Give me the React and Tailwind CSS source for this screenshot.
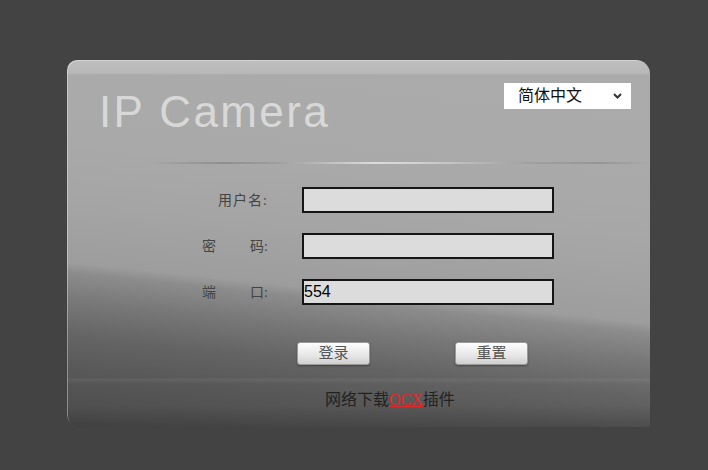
import React from "react";

const labelFont = "font-['Liberation_Serif','Noto_Sans_CJK_SC',serif]";

const Field = ({ label, value }) => (
  <div className="flex h-[26px] items-center pl-[135px]">
    <div className={`w-[66px] text-[14px] text-[#444] ${labelFont}`}>{label}</div>
    <div className="ml-[34px] flex h-[26px] w-[252px] items-center border-2 border-[#151515] bg-[#dcdcdc] font-['Liberation_Sans',sans-serif] text-[16px] text-black">
      {value}
    </div>
  </div>
);

const Btn = ({ children }) => (
  <button className="flex h-[23px] w-[73px] items-center justify-center rounded-[3px] border border-[#9a9a9a] bg-[linear-gradient(to_bottom,#fdfdfd,#e6e6e6_60%,#cfcfcf)] font-['Liberation_Serif','Noto_Sans_CJK_SC',serif] text-[15px] text-[#555] shadow-[0_1px_2px_rgba(0,0,0,0.35)]">
    {children}
  </button>
);

export default function App() {
  return (
    <div className="min-h-[470px] w-full bg-[#434343] pl-[67px] pt-[60px]">
      <div className="flex h-[367px] w-[583px] flex-col rounded-tl-[10px] rounded-tr-[14px] rounded-bl-[12px] bg-[linear-gradient(to_bottom,#bebebe_0px,#b8b8b8_13px,transparent_15px),linear-gradient(to_bottom,transparent_318px,rgba(255,255,255,0.06)_319px,transparent_324px,transparent_345px,rgba(0,0,0,0.14)_367px),linear-gradient(186deg,#ababab_40px,#a9a9a9_140px,#a5a5a5_200px,#9d9d9d_262px,#8c8c8c_272px,#787878_300px,#646464_335px,#585858_370px,#4a4a4a_427px)] shadow-[inset_1px_1px_0_rgba(255,255,255,0.35)]">
        <div className="flex items-start justify-between pl-[32px] pr-[19px] pt-[23px]">
          <div className="mt-[7px] font-['Liberation_Sans',sans-serif] text-[44px] leading-none tracking-[2.4px] text-[#d8d8d8]">
            IP Camera
          </div>
          <div className="flex h-[26px] w-[127px] items-center justify-between bg-white pl-[14px] pr-[9px] font-['Liberation_Sans','Noto_Sans_CJK_SC',sans-serif] text-[16px] text-[#111]">
            <span>简体中文</span>
            <svg width="9" height="6" viewBox="0 0 9 6">
              <path d="M1 1l3.5 3.5L8 1" fill="none" stroke="#333" strokeWidth="2" />
            </svg>
          </div>
        </div>

        <div className="ml-[80px] mt-[28px] h-[2px] w-[503px] bg-[linear-gradient(to_right,transparent,#8e8e8e_15%,#9c9c9c_25%,#dcdcdc_45%,#cfcfcf_55%,#a2a2a2_75%,#959595_90%,transparent)]" />

        <div className="mt-[23px] flex flex-col gap-[20px]">
          <Field label={<div className="whitespace-nowrap text-right tracking-[1px]">用户名:</div>} />
          <Field
            label={
              <div className="flex justify-between">
                <span>密</span>
                <span>码:</span>
              </div>
            }
          />
          <Field
            label={
              <div className="flex justify-between">
                <span>端</span>
                <span>口:</span>
              </div>
            }
            value="554"
          />
        </div>

        <div className="mt-[37px] flex gap-[85px] pl-[230px]">
          <Btn>登录</Btn>
          <Btn>重置</Btn>
        </div>

        <div className="mt-[25px] pl-[258px] font-['Liberation_Serif','Noto_Sans_CJK_SC',serif] text-[16px] leading-[20px] text-[#222]">
          网络下载<span className="text-[#e02a2a] underline">OCX</span>插件
        </div>
      </div>
    </div>
  );
}
